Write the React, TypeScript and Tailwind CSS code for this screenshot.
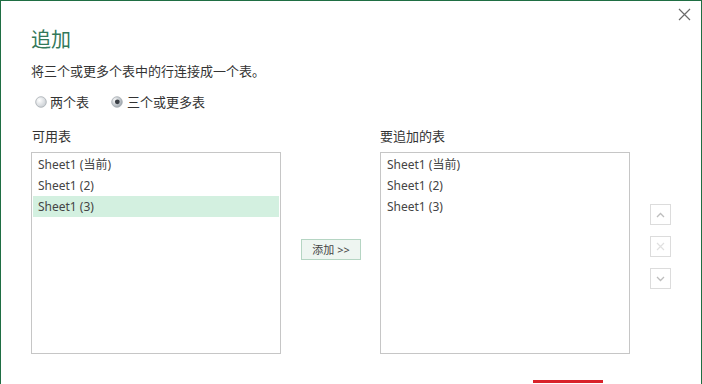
import React from "react";

const font = { fontFamily: '"Noto Sans", "Noto Sans CJK SC", sans-serif' };

function Radio({ checked }: { checked?: boolean }) {
  return (
    <svg width="12" height="12" viewBox="0 0 12 12" className="shrink-0">
      <defs>
        <radialGradient id={checked ? "rg1" : "rg0"} cx="0.35" cy="0.35" r="0.7">
          <stop offset="0" stopColor="#ffffff" />
          <stop offset="1" stopColor={checked ? "#9aa3ab" : "#c9ced3"} />
        </radialGradient>
      </defs>
      <circle cx="6" cy="6" r="5.3" fill={`url(#${checked ? "rg1" : "rg0"})`} stroke="#a7adb3" strokeWidth="0.8" />
      {checked && <circle cx="6.3" cy="5.8" r="2.4" fill="#3a3f45" />}
    </svg>
  );
}

function ListBox({ items, selected }: { items: string[]; selected?: number }) {
  return (
    <div className="w-[250px] h-[202px] border border-[#c6c6c6] bg-white px-[1px] pt-[1px]">
      {items.map((t, i) => (
        <div
          key={t}
          className={`h-[21px] px-[5px] text-[12px] leading-[21px] text-[#444] ${
            i === selected ? "bg-[#d3f0e0]" : ""
          }`}
        >
          {t}
        </div>
      ))}
    </div>
  );
}

function SideButton({ children }: { children: React.ReactNode }) {
  return (
    <div className="w-[21px] h-[21px] border border-[#dcdcdc] flex items-center justify-center">
      {children}
    </div>
  );
}

export default function App() {
  const tables = ["Sheet1 (当前)", "Sheet1 (2)", "Sheet1 (3)"];
  return (
    <div
      className="w-[702px] h-[384px] overflow-hidden bg-white border-l border-t border-r border-[#1f6e43] flex flex-col relative"
      style={font}
    >
      <button className="absolute right-[10px] top-[7px] text-[#6b6b6b]">
        <svg width="13" height="13" viewBox="0 0 13 13">
          <path d="M1 1 L12 12 M12 1 L1 12" stroke="currentColor" strokeWidth="1.2" />
        </svg>
      </button>

      <div className="pl-[30px] pt-[25px]">
        <div className="text-[20px] leading-[28px] text-[#33785a]">追加</div>
        <div className="mt-[8px] text-[13px] leading-[18px] text-[#333]">将三个或更多个表中的行连接成一个表。</div>
        <div className="mt-[13px] flex items-center text-[13px] leading-[18px] text-[#333]">
          <div className="flex items-center gap-[3px] ml-[4px]">
            <Radio />
            <span>两个表</span>
          </div>
          <div className="flex items-center gap-[4px] ml-[22px]">
            <Radio checked />
            <span>三个或更多表</span>
          </div>
        </div>

        <div className="mt-[16px] flex text-[13px] leading-[18px] text-[#333]">
          <div className="w-[349px] pl-[1px]">可用表</div>
          <div>要追加的表</div>
        </div>

        <div className="mt-[7px] flex items-start">
          <ListBox items={tables} selected={2} />
          <div className="ml-[20px] mt-[84px]">
            <button className="w-[60px] h-[21px] border border-[#b5d5c3] bg-[#eef5f1] text-[11px] leading-[19px] text-[#444]">
              添加 &gt;&gt;
            </button>
          </div>
          <div className="ml-[19px]">
            <ListBox items={tables} />
          </div>
          <div className="ml-[20px] mt-[52px] flex flex-col gap-[11px]">
            <SideButton>
              <svg width="9" height="6" viewBox="0 0 9 6">
                <path d="M1 5 L4.5 1.5 L8 5" fill="none" stroke="#bdbdbd" strokeWidth="1.3" />
              </svg>
            </SideButton>
            <SideButton>
              <svg width="9" height="9" viewBox="0 0 9 9">
                <path d="M1 1 L8 8 M8 1 L1 8" stroke="#e0e0e0" strokeWidth="1.2" />
              </svg>
            </SideButton>
            <SideButton>
              <svg width="9" height="6" viewBox="0 0 9 6">
                <path d="M1 1 L4.5 4.5 L8 1" fill="none" stroke="#bdbdbd" strokeWidth="1.3" />
              </svg>
            </SideButton>
          </div>
        </div>

        <div className="mt-[26px] ml-[502px] w-[70px] h-[24px] border-t-[3px] border-[#d9222a]" />
      </div>
    </div>
  );
}
